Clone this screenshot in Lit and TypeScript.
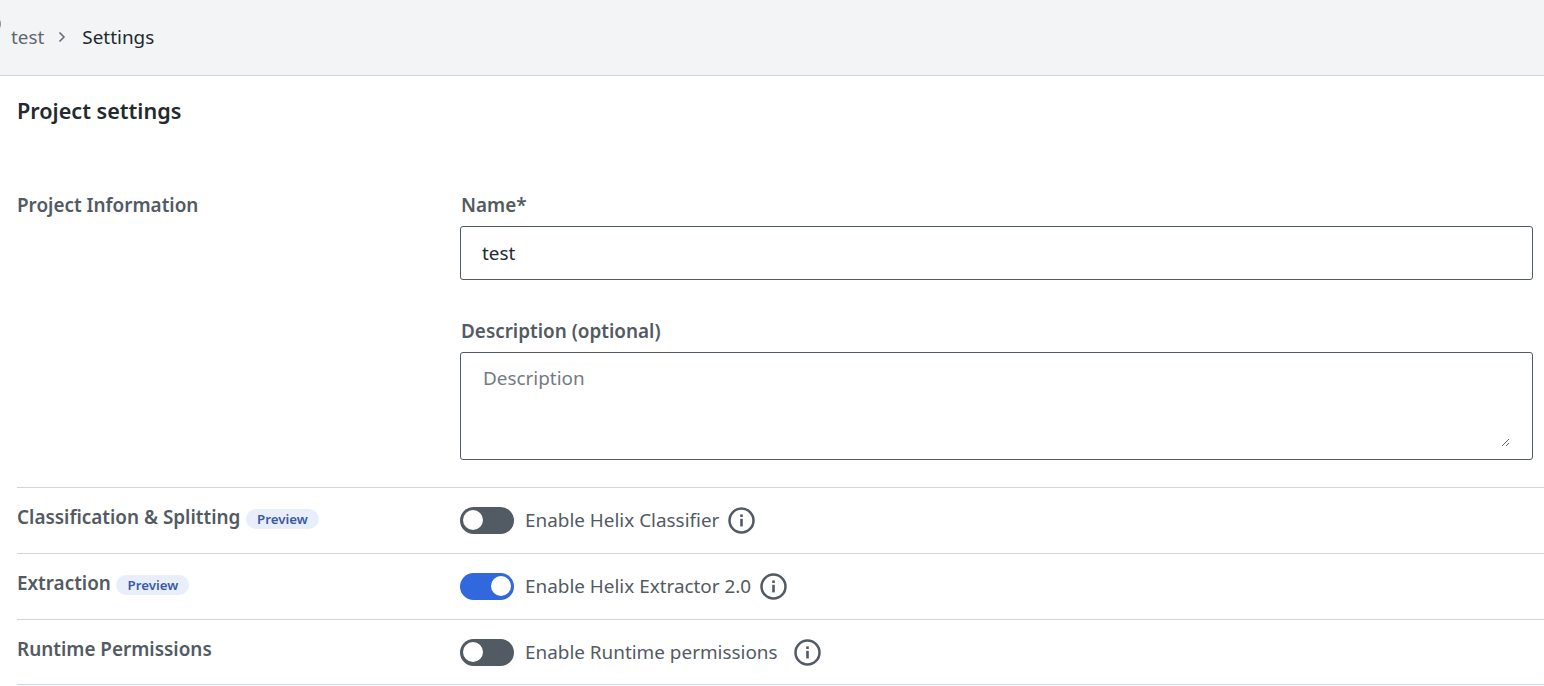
import { LitElement, html, css } from "lit";
import { customElement } from "lit/decorators.js";

const infoIcon = html`<svg class="info" viewBox="0 0 27 27" width="27" height="27" fill="none">
  <circle cx="13.5" cy="13.5" r="12" stroke="currentColor" stroke-width="2.5"></circle>
  <rect x="12.2" y="11.8" width="2.6" height="7.6" fill="currentColor"></rect>
  <rect x="12.2" y="7.4" width="2.6" height="2.6" fill="currentColor"></rect>
</svg>`;

@customElement("app-root")
export class AppRoot extends LitElement {
  static styles = css`
    :host {
      display: block;
      position: relative;
      height: 686px;
      overflow: hidden;
      background: #fff;
      font-family: "Noto Sans", sans-serif;
      color: #525a63;
    }
    .topbar {
      height: 76px;
      box-sizing: border-box;
      border-bottom: 1px solid #d0d5dd;
      background: #f3f4f6;
      display: flex;
      align-items: center;
      padding: 0 0 2px 11px;
      font-size: 18.9px;
    }
    .edge {
      position: absolute;
      left: -9px;
      top: 17px;
      width: 10px;
      height: 14px;
      border-radius: 50%;
      background: #8a9097;
    }
    .crumb {
      color: #5f6872;
    }
    .chevron {
      margin: 0 15px 0 13px;
      color: #5f6872;
    }
    .current {
      color: #22292f;
    }
    h1 {
      margin: 0;
      padding: 20px 0 0 17px;
      height: 72px;
      font-size: 21.6px;
      line-height: 30px;
      font-weight: 600;
      color: #22292f;
    }
    .row {
      display: grid;
      grid-template-columns: 443px 1fr;
      margin-left: 17px;
      border-bottom: 1px solid #d0d5dd;
    }
    .row.info-row {
      height: 66px;
      box-sizing: border-box;
      padding-top: 16px;
    }
    .row.info-row:last-child {
      height: 65px;
    }
    .row.project {
      padding-top: 24px;
      padding-bottom: 27px;
    }
    .heading {
      display: flex;
      align-items: flex-start;
      gap: 5.6px;
      font-size: 18.9px;
      line-height: 27px;
      font-weight: 600;
      color: #525a63;
    }
    .badge {
      margin-top: 5px;
      height: 20px;
      padding: 0 11px;
      border-radius: 10px;
      background: #e9effa;
      color: #3a5aa8;
      font-size: 13.3px;
      line-height: 21px;
      font-weight: 600;
    }
    .fields {
      padding-right: 11px;
      display: flex;
      flex-direction: column;
    }
    label {
      padding-left: 1px;
      font-size: 18.9px;
      line-height: 27px;
      font-weight: 600;
      margin-bottom: 7px;
      display: block;
    }
    input {
      display: block;
      width: 100%;
      box-sizing: border-box;
      height: 54px;
      margin-bottom: 38px;
      padding: 0 21px;
      border: 1px solid #525a63;
      border-radius: 3px;
      background: #fff;
      font-family: inherit;
      font-size: 18.9px;
      color: #22292f;
      outline: none;
    }
    .area {
      box-sizing: border-box;
      height: 108px;
      padding: 12px 22px 12px 22px;
      border: 1px solid #525a63;
      border-radius: 3px;
      display: flex;
    }
    textarea {
      flex: 1;
      min-width: 0;
      box-sizing: border-box;
      border: none;
      padding: 0;
      background: #fff;
      font-family: inherit;
      font-size: 18.9px;
      line-height: 27px;
      color: #22292f;
      outline: none;
      resize: vertical;
    }
    textarea::placeholder {
      color: #737b84;
      opacity: 1;
    }
    .control {
      display: flex;
      align-items: center;
      height: 28px;
      margin-top: 2px;
      font-size: 18.9px;
      color: #525a63;
    }
    .toggle {
      width: 54px;
      height: 27px;
      border-radius: 14px;
      background: #525a63;
      flex: none;
      display: flex;
      align-items: center;
      padding: 0 3px;
      box-sizing: border-box;
      margin-right: 11px;
    }
    .toggle.on {
      background: #3268de;
      justify-content: flex-end;
    }
    .knob {
      width: 20px;
      height: 20px;
      border-radius: 50%;
      background: #fff;
    }
    .icon-slot {
      display: flex;
      margin-left: 9px;
    }
    .icon-slot.wide {
      margin-left: 16px;
    }
    .info {
      display: block;
      color: #525a63;
    }
  `;

  private toggleRow(
    title: string,
    label: string,
    on: boolean,
    preview: boolean,
    wideGap: boolean
  ) {
    return html`<div class="row info-row">
      <div class="heading">
        <span>${title}</span>
        ${preview ? html`<span class="badge">Preview</span>` : ""}
      </div>
      <div>
        <div class="control">
          <span class="toggle ${on ? "on" : ""}"><span class="knob"></span></span>
          <span>${label}</span>
          <span class="icon-slot ${wideGap ? "wide" : ""}">${infoIcon}</span>
        </div>
      </div>
    </div>`;
  }

  render() {
    return html`
      <div class="edge"></div>
      <div class="topbar">
        <span class="crumb">test</span>
        <svg class="chevron" width="10" height="12" viewBox="0 0 10 12" fill="none">
          <path d="M2.5 1.5 7 6l-4.5 4.5" stroke="currentColor" stroke-width="1.5"></path>
        </svg>
        <span class="current">Settings</span>
      </div>
      <h1>Project settings</h1>
      <div class="row project">
        <div class="heading">Project Information</div>
        <div class="fields">
          <label>Name*</label>
          <input .value=${"test"} />
          <label>Description (optional)</label>
          <div class="area"><textarea placeholder="Description"></textarea></div>
        </div>
      </div>
      ${this.toggleRow("Classification & Splitting", "Enable Helix Classifier", false, true, false)}
      ${this.toggleRow("Extraction", "Enable Helix Extractor 2.0", true, true, false)}
      ${this.toggleRow("Runtime Permissions", "Enable Runtime permissions", false, false, true)}
    `;
  }
}
